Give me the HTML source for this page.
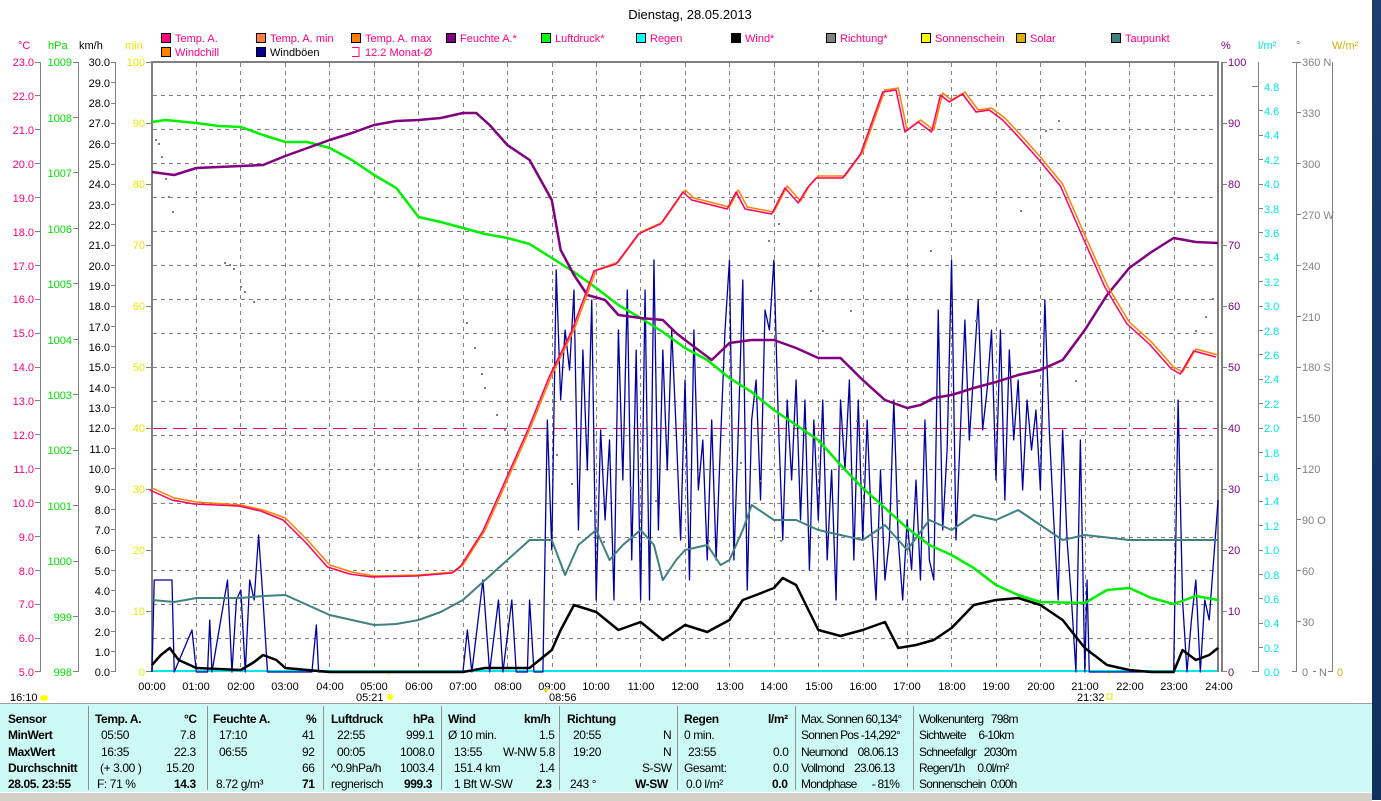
<!DOCTYPE html>
<html><head><meta charset="utf-8"><style>
html,body{margin:0;padding:0;background:#fff;width:1381px;height:800px;overflow:hidden;font-family:"Liberation Sans",sans-serif}
svg{position:absolute;left:0;top:0}
text{font-family:"Liberation Sans",sans-serif;font-size:11px}
.c{fill:#ff0080}.h{fill:#00e000}.k{fill:#000}.m{fill:#e8e800}.p{fill:#800080}.r{fill:#00e8e8}.d{fill:#808080}
#panel{position:absolute;left:0;top:703px;width:1372px;height:88px;background:#ccf8f6;border-top:1px solid #a0a0a0;font-size:12px;letter-spacing:-0.4px}
#panel div{position:absolute;white-space:nowrap}
.b{font-weight:bold}
.v{position:absolute;top:2px;height:84px;width:1px;background:#909090}
#status{position:absolute;left:0;top:792px;width:1372px;height:8px;background:#d4d0c8;border-top:1px solid #fff}
#strip{position:absolute;left:1372px;top:0;width:9px;height:800px;background:linear-gradient(#1b3d70,#10305e)}
</style></head><body>
<svg width="1381" height="800" viewBox="0 0 1381 800">
<text x="690" y="19" text-anchor="middle" style="font-size:13px" fill="#000">Dienstag, 28.05.2013</text>
<g stroke="#000" stroke-width="1">
<rect x="161.5" y="33.5" width="9" height="9" fill="#ff0080"/>
<rect x="256.5" y="33.5" width="9" height="9" fill="#ff8040"/>
<rect x="351.5" y="33.5" width="9" height="9" fill="#ff8000"/>
<rect x="446.5" y="33.5" width="9" height="9" fill="#800080"/>
<rect x="541.5" y="33.5" width="9" height="9" fill="#00ff00"/>
<rect x="636.5" y="33.5" width="9" height="9" fill="#00ffff"/>
<rect x="731.5" y="33.5" width="9" height="9" fill="#000"/>
<rect x="826.5" y="33.5" width="9" height="9" fill="#808080"/>
<rect x="921.5" y="33.5" width="9" height="9" fill="#ffff00"/>
<rect x="1016.5" y="33.5" width="9" height="9" fill="#e0b000"/>
<rect x="1111.5" y="33.5" width="9" height="9" fill="#408080"/>
<rect x="161.5" y="47.5" width="9" height="9" fill="#ff8000"/>
<rect x="256.5" y="47.5" width="9" height="9" fill="#000090"/>
</g>
<path d="M352 47.5h7v9h-7" fill="none" stroke="#ff0080"/>
<g class="c"><text x="175" y="42">Temp. A.</text><text x="270" y="42">Temp. A. min</text><text x="365" y="42">Temp. A. max</text><text x="175" y="56">Windchill</text><text x="365" y="56">12.2 Monat-Ø</text><text x="460" y="42">Feuchte A.*</text><text x="555" y="42">Luftdruck*</text><text x="650" y="42">Regen</text><text x="745" y="42">Wind*</text><text x="840" y="42">Richtung*</text><text x="935" y="42">Sonnenschein</text><text x="1030" y="42">Solar</text><text x="1125" y="42">Taupunkt</text></g>
<text x="270" y="56" fill="#000">Windböen</text>
<text x="18" y="49" class="c">°C</text><text x="48" y="49" class="h">hPa</text><text x="79" y="49" class="k">km/h</text><text x="125" y="49" class="m">min</text>
<text x="1221" y="49" class="p">%</text><text x="1258" y="49" class="r">l/m²</text><text x="1296" y="49" class="d">°</text><text x="1332" y="49" fill="#d4b000">W/m²</text>
<g stroke="#808080" stroke-width="1" fill="none">
<path d="M40.5 62V672M78.5 62V672M115.5 62V672"/>
<path d="M1258.5 62V672M1296.5 62V672M1332.5 62V672"/>
</g>
<g stroke="#808080" stroke-width="1" stroke-dasharray="4,4" fill="none">
<path d="M196.5 63V671M240.5 63V671M285.5 63V671M329.5 63V671M374.5 63V671M418.5 63V671M463.5 63V671M507.5 63V671M552.5 63V671M596.5 63V671M640.5 63V671M685.5 63V671M729.5 63V671M774.5 63V671M818.5 63V671M863.5 63V671M907.5 63V671M951.5 63V671M996.5 63V671M1040.5 63V671M1085.5 63V671M1129.5 63V671M1174.5 63V671"/>
<path d="M153 95.5H1217M153 129.5H1217M153 163.5H1217M153 197.5H1217M153 231.5H1217M153 265.5H1217M153 299.5H1217M153 333.5H1217M153 367.5H1217M153 401.5H1217M153 435.5H1217M153 469.5H1217M153 503.5H1217M153 537.5H1217M153 570.5H1217M153 604.5H1217M153 638.5H1217"/>
</g>
<g stroke="#808080" stroke-width="2" fill="none"><path d="M152 672V62H1218V672"/><path d="M1222 62V672"/></g>
<g stroke="#808080" stroke-width="1">
<path d="M35 62.5h6M35 95.5h6M35 129.5h6M35 163.5h6M35 197.5h6M35 231.5h6M35 265.5h6M35 299.5h6M35 333.5h6M35 367.5h6M35 400.5h6M35 434.5h6M35 468.5h6M35 502.5h6M35 536.5h6M35 570.5h6M35 604.5h6M35 638.5h6M35 671.5h6"/>
<path d="M73 62.5h6M73 117.5h6M73 172.5h6M73 228.5h6M73 283.5h6M73 339.5h6M73 394.5h6M73 450.5h6M73 505.5h6M73 561.5h6M73 616.5h6M73 671.5h6"/>
<path d="M111 62.5h5M111 82.5h5M111 103.5h5M111 123.5h5M111 143.5h5M111 164.5h5M111 184.5h5M111 204.5h5M111 224.5h5M111 245.5h5M111 265.5h5M111 285.5h5M111 306.5h5M111 326.5h5M111 346.5h5M111 367.5h5M111 387.5h5M111 407.5h5M111 428.5h5M111 448.5h5M111 468.5h5M111 489.5h5M111 509.5h5M111 529.5h5M111 550.5h5M111 570.5h5M111 590.5h5M111 611.5h5M111 631.5h5M111 651.5h5M111 671.5h5"/>
<path d="M146 62.5h6M146 123.5h6M146 184.5h6M146 245.5h6M146 306.5h6M146 367.5h6M146 428.5h6M146 489.5h6M146 550.5h6M146 611.5h6M146 671.5h6"/>
<path d="M1222 62.5h5M1222 123.5h5M1222 184.5h5M1222 245.5h5M1222 306.5h5M1222 367.5h5M1222 428.5h5M1222 489.5h5M1222 550.5h5M1222 611.5h5M1222 671.5h5"/>
<path d="M1252 86.5h6M1258 110.5h5M1258 135.5h5M1258 159.5h5M1258 184.5h5M1258 208.5h5M1258 232.5h5M1258 257.5h5M1258 281.5h5M1258 306.5h5M1258 330.5h5M1258 354.5h5M1258 379.5h5M1258 403.5h5M1258 428.5h5M1258 452.5h5M1258 476.5h5M1258 501.5h5M1258 525.5h5M1258 550.5h5M1258 574.5h5M1258 598.5h5M1258 623.5h5M1258 647.5h5M1252 671.5h6"/>
<path d="M1292 62.5h9M1296 112.5h5M1296 163.5h5M1296 214.5h5M1296 265.5h5M1296 316.5h5M1296 367.5h5M1296 417.5h5M1296 468.5h5M1296 519.5h5M1296 570.5h5M1296 621.5h5M1292 671.5h5"/>
<path d="M1328 671.5h4"/><path d="M1316 671.5h-3"/>
</g>
<g class="c" text-anchor="end"><text x="34" y="66">23.0</text><text x="34" y="100">22.0</text><text x="34" y="134">21.0</text><text x="34" y="168">20.0</text><text x="34" y="202">19.0</text><text x="34" y="236">18.0</text><text x="34" y="270">17.0</text><text x="34" y="303">16.0</text><text x="34" y="337">15.0</text><text x="34" y="371">14.0</text><text x="34" y="405">13.0</text><text x="34" y="439">12.0</text><text x="34" y="473">11.0</text><text x="34" y="507">10.0</text><text x="34" y="541">9.0</text><text x="34" y="575">8.0</text><text x="34" y="608">7.0</text><text x="34" y="642">6.0</text><text x="34" y="676">5.0</text></g>
<g class="h" text-anchor="end"><text x="72" y="66">1009</text><text x="72" y="122">1008</text><text x="72" y="177">1007</text><text x="72" y="233">1006</text><text x="72" y="288">1005</text><text x="72" y="344">1004</text><text x="72" y="399">1003</text><text x="72" y="454">1002</text><text x="72" y="510">1001</text><text x="72" y="565">1000</text><text x="72" y="621">999</text><text x="72" y="676">998</text></g>
<g class="k" text-anchor="end"><text x="110" y="66">30.0</text><text x="110" y="87">29.0</text><text x="110" y="107">28.0</text><text x="110" y="127">27.0</text><text x="110" y="148">26.0</text><text x="110" y="168">25.0</text><text x="110" y="188">24.0</text><text x="110" y="209">23.0</text><text x="110" y="229">22.0</text><text x="110" y="249">21.0</text><text x="110" y="270">20.0</text><text x="110" y="290">19.0</text><text x="110" y="310">18.0</text><text x="110" y="331">17.0</text><text x="110" y="351">16.0</text><text x="110" y="371">15.0</text><text x="110" y="392">14.0</text><text x="110" y="412">13.0</text><text x="110" y="432">12.0</text><text x="110" y="453">11.0</text><text x="110" y="473">10.0</text><text x="110" y="493">9.0</text><text x="110" y="514">8.0</text><text x="110" y="534">7.0</text><text x="110" y="554">6.0</text><text x="110" y="575">5.0</text><text x="110" y="595">4.0</text><text x="110" y="615">3.0</text><text x="110" y="636">2.0</text><text x="110" y="656">1.0</text><text x="110" y="676">0.0</text></g>
<g class="m" text-anchor="end"><text x="145" y="66">100</text><text x="145" y="127">90</text><text x="145" y="188">80</text><text x="145" y="249">70</text><text x="145" y="310">60</text><text x="145" y="371">50</text><text x="145" y="432">40</text><text x="145" y="493">30</text><text x="145" y="554">20</text><text x="145" y="615">10</text><text x="145" y="676">0</text></g>
<g class="p"><text x="1228" y="66">100</text><text x="1228" y="127">90</text><text x="1228" y="188">80</text><text x="1228" y="249">70</text><text x="1228" y="310">60</text><text x="1228" y="371">50</text><text x="1228" y="432">40</text><text x="1228" y="493">30</text><text x="1228" y="554">20</text><text x="1228" y="615">10</text><text x="1228" y="676">0</text></g>
<g class="r"><text x="1264" y="91">4.8</text><text x="1264" y="115">4.6</text><text x="1264" y="139">4.4</text><text x="1264" y="164">4.2</text><text x="1264" y="188">4.0</text><text x="1264" y="213">3.8</text><text x="1264" y="237">3.6</text><text x="1264" y="261">3.4</text><text x="1264" y="286">3.2</text><text x="1264" y="310">3.0</text><text x="1264" y="335">2.8</text><text x="1264" y="359">2.6</text><text x="1264" y="383">2.4</text><text x="1264" y="408">2.2</text><text x="1264" y="432">2.0</text><text x="1264" y="457">1.8</text><text x="1264" y="481">1.6</text><text x="1264" y="505">1.4</text><text x="1264" y="530">1.2</text><text x="1264" y="554">1.0</text><text x="1264" y="579">0.8</text><text x="1264" y="603">0.6</text><text x="1264" y="627">0.4</text><text x="1264" y="652">0.2</text><text x="1264" y="676">0.0</text></g>
<g class="d"><text x="1302" y="66">360 N</text><text x="1302" y="117">330</text><text x="1302" y="168">300</text><text x="1302" y="219">270 W</text><text x="1302" y="270">240</text><text x="1302" y="321">210</text><text x="1302" y="371">180 S</text><text x="1302" y="422">150</text><text x="1302" y="473">120</text><text x="1302" y="524">90  O</text><text x="1302" y="575">60</text><text x="1302" y="626">30</text><text x="1302" y="676">0</text><text x="1319" y="676">N</text></g>
<text x="1337" y="676" fill="#d4b000">0</text>
<g class="k" text-anchor="middle"><text x="152" y="690">00:00</text><text x="196" y="690">01:00</text><text x="241" y="690">02:00</text><text x="285" y="690">03:00</text><text x="330" y="690">04:00</text><text x="374" y="690">05:00</text><text x="419" y="690">06:00</text><text x="463" y="690">07:00</text><text x="508" y="690">08:00</text><text x="552" y="690">09:00</text><text x="596" y="690">10:00</text><text x="641" y="690">11:00</text><text x="685" y="690">12:00</text><text x="730" y="690">13:00</text><text x="774" y="690">14:00</text><text x="819" y="690">15:00</text><text x="863" y="690">16:00</text><text x="907" y="690">17:00</text><text x="952" y="690">18:00</text><text x="996" y="690">19:00</text><text x="1041" y="690">20:00</text><text x="1085" y="690">21:00</text><text x="1130" y="690">22:00</text><text x="1174" y="690">23:00</text><text x="1219" y="690">24:00</text></g>
<text x="10" y="701" class="k">16:10</text><ellipse cx="44" cy="698" rx="4" ry="3" fill="#ffff00"/>
<text x="356" y="701" class="k">05:21</text><circle cx="390" cy="697" r="3" fill="#ffff00"/><path d="M389 672v4" stroke="#ff0"/>
<text x="549" y="701" class="k">08:56</text><path d="M546 693l-3-4h6z" fill="#e0e000"/>
<text x="1077" y="701" class="k">21:32</text><rect x="1107" y="694" width="5" height="5" fill="none" stroke="#e8e800"/><path d="M1109 672v4" stroke="#ff0"/>
<path d="M153 428.5H1217" stroke="#ff0080" stroke-width="1" stroke-dasharray="14,6"/>
<path d="M153 671H1217" stroke="#00e8e8" stroke-width="2"/>
<g transform="translate(152,0) scale(44.42,1)" fill="none" stroke-linejoin="round">
<polyline vector-effect="non-scaling-stroke" stroke="#0000a0" stroke-width="1.3" points="0,672 0.05,580 0.45,580 0.5,672 0.9,630 1,672 1.25,672 1.3,620 1.35,672 1.7,580 1.8,672 1.9,600 2,590 2.1,672 2.2,580 2.3,600 2.4,535 2.5,600 2.6,672 3.6,672 3.7,625 3.75,672 7,672 7.1,630 7.2,672 7.45,580 7.6,672 7.8,600 7.9,672 8.1,600 8.2,672 8.45,672 8.5,600 8.6,672 8.8,672 8.9,420 9,550 9.1,270 9.2,400 9.3,330 9.4,370 9.5,290 9.6,530 9.7,350 9.8,470 9.9,300 10,600 10.1,430 10.2,520 10.3,440 10.4,600 10.5,330 10.6,480 10.7,290 10.8,560 10.9,350 11,600 11.1,290 11.2,600 11.3,260 11.4,530 11.5,350 11.6,470 11.7,330 11.8,430 11.9,540 12,380 12.1,580 12.2,330 12.3,490 12.4,440 12.5,560 12.6,420 12.7,560 12.8,440 12.9,330 13,260 13.1,560 13.2,430 13.3,280 13.4,590 13.5,420 13.6,380 13.7,500 13.8,310 13.9,330 14,260 14.1,420 14.2,540 14.3,400 14.4,480 14.5,380 14.6,520 14.7,400 14.8,570 14.9,420 15,520 15.1,400 15.2,560 15.3,470 15.4,600 15.5,400 15.6,470 15.7,380 15.8,560 15.9,400 16,540 16.1,420 16.2,530 16.3,600 16.4,470 16.5,580 16.6,540 16.7,400 16.8,540 16.9,600 17,520 17.1,570 17.2,480 17.3,580 17.4,420 17.5,560 17.6,580 17.7,310 17.8,530 17.9,450 18,260 18.1,540 18.2,430 18.3,320 18.4,440 18.5,370 18.6,300 18.7,430 18.8,390 18.9,330 19,480 19.1,330 19.2,500 19.3,350 19.4,440 19.5,380 19.6,490 19.7,400 19.8,450 19.9,410 20,490 20.1,300 20.2,430 20.3,520 20.4,600 20.5,430 20.6,540 20.7,600 20.8,672 20.9,440 21,672 21.05,580 21.1,672 23,672 23.1,400 23.2,600 23.3,672 23.4,620 23.5,580 23.6,672 23.7,600 23.8,620 23.9,560 24,500"/>
<polyline vector-effect="non-scaling-stroke" stroke="#408080" stroke-width="2" points="0,600 0.5,602 1,598 2,598 2.5,596 3,595 3.5,605 4,615 4.5,620 5,625 5.5,624 6,620 6.5,612 7,600 7.5,580 8,560 8.5,540 9,540 9.3,575 9.6,545 10,530 10.3,560 10.6,545 11,530 11.3,545 11.5,580 11.8,560 12,550 12.5,545 12.8,565 13,560 13.3,530 13.5,505 14,520 14.5,520 15,530 15.5,535 16,540 16.5,525 17,550 17.5,520 18,530 18.5,515 19,520 19.5,510 20,525 20.5,540 21,535 22,540 23,540 24,540"/>
<polyline vector-effect="non-scaling-stroke" stroke="#00f000" stroke-width="2.5" points="0,122 0.3,120 1,123 1.5,126 2,127 2.5,135 3,142 3.5,142 4,148 4.5,160 5,175 5.5,188 6,217 6.5,222 7,228 7.5,234 8,238 8.5,244 9,258 9.5,272 10,288 10.5,305 11,318 11.5,332 12,348 12.5,360 13,378 13.5,392 14,410 14.5,425 15,440 15.5,465 16,488 16.5,508 17,528 17.5,545 18,555 18.5,568 19,585 19.5,595 20,602 21,603 21.5,590 22,588 22.5,598 23,604 23.5,596 24,600"/>
<polyline vector-effect="non-scaling-stroke" stroke="#800080" stroke-width="2.5" points="0,172 0.5,175 1,168 2,166 2.5,165 3,156 3.5,148 4,140 4.5,133 5,125 5.5,121 6,120 6.5,118 7,113 7.3,113 7.6,125 8,145 8.5,160 9,200 9.2,250 9.5,275 9.8,295 10.2,300 10.5,315 11,318 11.5,320 11.8,333 12,340 12.3,350 12.6,360 13,343 13.5,340 14,340 14.5,348 15,358 15.5,358 16,380 16.5,400 17,408 17.3,405 17.6,398 18,395 18.5,388 19,382 19.5,375 20,370 20.5,360 21,330 21.5,295 22,268 22.5,252 23,238 23.5,242 24,243"/>
<polyline vector-effect="non-scaling-stroke" stroke="#ff8000" stroke-width="1.5" points="0,488 0.5,498 1,502 2,505 2.5,510 3,518 3.5,540 4,565 4.5,572 5,576 6,575 6.8,572 7,565 7.5,530 8,480 8.5,430 9,375 9.5,330 10,270 10.5,262 11,232 11.5,222 12,190 12.2,198 13,207 13.2,190 13.4,207 14,212 14.3,186 14.6,201 14.8,186 15,176 15.6,176 16,152 16.5,90 16.8,88 17,130 17.3,120 17.6,130 17.8,93 18,100 18.3,92 18.6,110 18.9,108 19.2,118 19.6,137 20,157 20.5,184 21,235 21.5,285 22,322 22.5,342 23,367 23.2,372 23.5,349 24,355"/>
<polyline vector-effect="non-scaling-stroke" stroke="#ff0060" stroke-width="1.5" transform="translate(-0.05,0)" points="0,490 0.5,500 1,504 2,506 2.5,511 3,520 3.5,542 4,567 4.5,574 5,577 6,576 6.8,573 7,566 7.5,531 8,481 8.5,431 9,376 9.5,331 10,271 10.5,264 11,234 11.5,224 12,192 12.2,200 13,209 13.2,192 13.4,209 14,214 14.3,188 14.6,203 14.8,188 15,178 15.6,178 16,154 16.5,92 16.8,90 17,132 17.3,122 17.6,132 17.8,95 18,102 18.3,94 18.6,112 18.9,110 19.2,120 19.6,139 20,159 20.5,186 21,237 21.5,287 22,324 22.5,344 23,369 23.2,374 23.5,351 24,357"/>
<polyline vector-effect="non-scaling-stroke" stroke="#000" stroke-width="2.5" points="0,665 0.2,655 0.4,648 0.6,660 1,668 2,670 2.3,662 2.5,655 2.8,660 3,668 4,672 7,672 7.5,668 8.5,668 9,650 9.2,630 9.5,605 10,612 10.5,630 11,622 11.5,640 12,625 12.5,632 13,620 13.3,600 13.6,595 14,588 14.2,578 14.5,585 14.8,612 15,630 15.5,636 16,630 16.5,622 16.8,648 17.2,645 17.6,640 18,628 18.5,605 19,600 19.5,598 20,605 20.5,620 21,648 21.5,665 22,670 22.5,672 23,672 23.2,650 23.5,660 23.8,655 24,648"/>
</g>
<g fill="#808080">
<rect x="155" y="139" width="2" height="2"/><rect x="158" y="143" width="2" height="2"/><rect x="161" y="156" width="2" height="2"/><rect x="165" y="178" width="2" height="2"/><rect x="168" y="196" width="2" height="2"/><rect x="172" y="211" width="2" height="2"/>
<rect x="224" y="262" width="2" height="2"/><rect x="229" y="264" width="2" height="2"/><rect x="233" y="268" width="2" height="2"/><rect x="240" y="286" width="2" height="2"/><rect x="244" y="291" width="2" height="2"/><rect x="253" y="301" width="2" height="2"/>
<rect x="466" y="322" width="2" height="2"/><rect x="474" y="347" width="2" height="2"/><rect x="481" y="373" width="2" height="2"/><rect x="484" y="387" width="2" height="2"/><rect x="496" y="414" width="2" height="2"/><rect x="504" y="429" width="2" height="2"/>
<rect x="556" y="454" width="2" height="2"/><rect x="571" y="483" width="2" height="2"/><rect x="590" y="510" width="2" height="2"/><rect x="603" y="541" width="2" height="2"/><rect x="630" y="487" width="2" height="2"/><rect x="655" y="500" width="2" height="2"/><rect x="690" y="510" width="2" height="2"/><rect x="708" y="540" width="2" height="2"/>
<rect x="740" y="462" width="2" height="2"/><rect x="760" y="480" width="2" height="2"/><rect x="780" y="540" width="2" height="2"/><rect x="822" y="330" width="2" height="2"/><rect x="856" y="420" width="2" height="2"/><rect x="898" y="500" width="2" height="2"/>
<rect x="768" y="240" width="2" height="2"/><rect x="778" y="223" width="2" height="2"/><rect x="810" y="290" width="2" height="2"/><rect x="850" y="310" width="2" height="2"/><rect x="930" y="250" width="2" height="2"/><rect x="975" y="320" width="2" height="2"/><rect x="1020" y="210" width="2" height="2"/><rect x="1045" y="130" width="2" height="2"/><rect x="1058" y="120" width="2" height="2"/><rect x="1075" y="380" width="2" height="2"/><rect x="1205" y="316" width="2" height="2"/><rect x="1212" y="298" width="2" height="2"/><rect x="1195" y="330" width="2" height="2"/>
</g>
</svg>
<div id="panel">
<div class="v" style="left:88px"></div><div class="v" style="left:207px"></div><div class="v" style="left:323px"></div><div class="v" style="left:441px"></div><div class="v" style="left:559px"></div><div class="v" style="left:677px"></div><div class="v" style="left:795px"></div><div class="v" style="left:913px"></div>
<div class="b" style="left:8px;top:8px">Sensor</div><div class="b" style="left:8px;top:24px">MinWert</div><div class="b" style="left:8px;top:41px">MaxWert</div><div class="b" style="left:8px;top:57px">Durchschnitt</div><div class="b" style="left:8px;top:73px">28.05. 23:55</div>
<div class="b" style="left:95px;top:8px">Temp. A.</div><div class="b" style="left:184px;top:8px">°C</div>
<div style="left:101px;top:24px">05:50</div><div style="left:180px;top:24px">7.8</div>
<div style="left:101px;top:41px">16:35</div><div style="left:174px;top:41px">22.3</div>
<div style="left:100px;top:57px">(+ 3.00 )</div><div style="left:166px;top:57px">15.20</div>
<div style="left:97px;top:73px">F: 71 %</div><div class="b" style="left:174px;top:73px">14.3</div>
<div class="b" style="left:213px;top:8px">Feuchte A.</div><div class="b" style="left:306px;top:8px">%</div>
<div style="left:219px;top:24px">17:10</div><div style="left:302px;top:24px">41</div>
<div style="left:219px;top:41px">06:55</div><div style="left:302px;top:41px">92</div>
<div style="left:302px;top:57px">66</div>
<div style="left:216px;top:73px">8.72 g/m³</div><div class="b" style="left:302px;top:73px">71</div>
<div class="b" style="left:331px;top:8px">Luftdruck</div><div class="b" style="left:413px;top:8px">hPa</div>
<div style="left:337px;top:24px">22:55</div><div style="left:406px;top:24px">999.1</div>
<div style="left:337px;top:41px">00:05</div><div style="left:400px;top:41px">1008.0</div>
<div style="left:331px;top:57px">^0.9hPa/h</div><div style="left:400px;top:57px">1003.4</div>
<div style="left:331px;top:73px">regnerisch</div><div class="b" style="left:404px;top:73px">999.3</div>
<div class="b" style="left:448px;top:8px">Wind</div><div class="b" style="left:524px;top:8px">km/h</div>
<div style="left:448px;top:24px">Ø 10 min.</div><div style="left:539px;top:24px">1.5</div>
<div style="left:454px;top:41px">13:55</div><div style="left:503px;top:41px">W-NW 5.8</div>
<div style="left:454px;top:57px">151.4 km</div><div style="left:539px;top:57px">1.4</div>
<div style="left:454px;top:73px">1 Bft W-SW</div><div class="b" style="left:536px;top:73px">2.3</div>
<div class="b" style="left:567px;top:8px">Richtung</div>
<div style="left:573px;top:24px">20:55</div><div style="left:663px;top:24px">N</div>
<div style="left:573px;top:41px">19:20</div><div style="left:663px;top:41px">N</div>
<div style="left:642px;top:57px">S-SW</div>
<div style="left:570px;top:73px">243 °</div><div class="b" style="left:635px;top:73px">W-SW</div>
<div class="b" style="left:684px;top:8px">Regen</div><div class="b" style="left:768px;top:8px">l/m²</div>
<div style="left:684px;top:24px">0 min.</div>
<div style="left:688px;top:41px">23:55</div><div style="left:773px;top:41px">0.0</div>
<div style="left:684px;top:57px">Gesamt:</div><div style="left:773px;top:57px">0.0</div>
<div style="left:686px;top:73px">0.0 l/m²</div><div class="b" style="left:772px;top:73px">0.0</div>
<div style="left:801px;top:8px;letter-spacing:-0.8px">Max. Sonnen 60,134°</div>
<div style="left:801px;top:24px;letter-spacing:-0.8px">Sonnen Pos -14,292°</div>
<div style="left:801px;top:41px;letter-spacing:-0.8px">Neumond&nbsp;&nbsp;&nbsp; 08.06.13</div>
<div style="left:801px;top:57px;letter-spacing:-0.8px">Vollmond&nbsp;&nbsp;&nbsp; 23.06.13</div>
<div style="left:801px;top:73px;letter-spacing:-0.8px">Mondphase&nbsp;&nbsp;&nbsp;&nbsp;&nbsp; - 81%</div>
<div style="left:919px;top:8px;letter-spacing:-0.8px">Wolkenunterg&nbsp;&nbsp; 798m</div>
<div style="left:919px;top:24px;letter-spacing:-0.8px">Sichtweite&nbsp;&nbsp;&nbsp;&nbsp; 6-10km</div>
<div style="left:919px;top:41px;letter-spacing:-0.8px">Schneefallgr&nbsp;&nbsp; 2030m</div>
<div style="left:919px;top:57px;letter-spacing:-0.8px">Regen/1h&nbsp;&nbsp;&nbsp;&nbsp; 0.0l/m²</div>
<div style="left:919px;top:73px;letter-spacing:-0.8px">Sonnenschein&nbsp; 0:00h</div>
</div>
<div id="status"></div>
<div id="strip"></div>
</body></html>
